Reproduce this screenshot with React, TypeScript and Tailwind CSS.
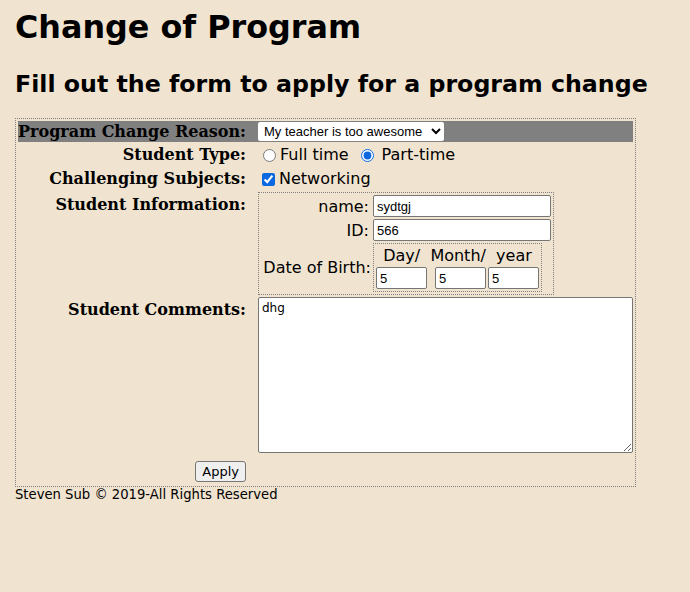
import React from "react";

const sans = "font-['DejaVu_Sans',Verdana,sans-serif]";
const serif = "font-['DejaVu_Serif',Georgia,serif]";
const arial = "font-['Liberation_Sans',Arial,sans-serif]";

const inputCls = `block h-[22px] rounded-[2px] border border-[#767676] bg-white px-[3px] text-[13px] text-black ${arial}`;
const labelCls = `w-[232px] p-0 pr-[4px] text-right text-[16px] font-bold ${serif}`;

export default function App() {
  return (
    <div className={`min-h-[592px] w-full bg-[#f0e4d0] px-[15px] pt-[8px] text-black ${sans}`}>
      <h1 className="text-[31.8px] font-bold leading-[37px]">Change of Program</h1>
      <h2 className="mt-[25px] text-[23.7px] font-bold leading-[28px]">
        Fill out the form to apply for a program change
      </h2>
      <form className="mt-[20px]">
        <table className="w-[621px] border border-dotted border-[#808080] border-separate border-spacing-[2px]">
          <tbody>
            <tr className="bg-[#808080]">
              <td className={`${labelCls} h-[21px] leading-[19px] shadow-[2px_0_0_#808080]`}>
                Program Change Reason:
              </td>
              <td className="h-[21px] p-0 pl-[6px]">
                <select
                  defaultValue="awesome"
                  className={`block h-[19px] w-[186px] rounded-[2px] bg-white px-[2px] text-[13px] leading-[15px] text-black ${arial}`}
                >
                  <option value="awesome">My teacher is too awesome</option>
                </select>
              </td>
            </tr>
            <tr>
              <td className={`${labelCls} h-[22px] leading-[22px]`}>Student Type:</td>
              <td className="h-[22px] p-0 pl-[6px] text-[16px] leading-[22px]">
                <div className="flex items-center">
                  <input type="radio" name="t" className="ml-[5px] mr-[4px] h-[13px] w-[13px]" />
                  <span>Full time</span>
                  <input
                    type="radio"
                    name="t"
                    defaultChecked
                    className="ml-[12px] mr-[8px] h-[13px] w-[13px] accent-[#0b68e0]"
                  />
                  <span>Part-time</span>
                </div>
              </td>
            </tr>
            <tr>
              <td className={`${labelCls} h-[22px] leading-[22px]`}>Challenging Subjects:</td>
              <td className="h-[22px] p-0 pl-[6px] text-[16px] leading-[22px]">
                <div className="flex items-center">
                  <input type="checkbox" defaultChecked className="ml-[4px] mr-[4px] h-[13px] w-[13px] accent-[#0b68e0]" />
                  <span>Networking</span>
                </div>
              </td>
            </tr>
            <tr>
              <td className={`${labelCls} align-top pt-[2px] leading-[22px]`}>Student Information:</td>
              <td className="p-0 pl-[6px]">
                <table className="border border-dotted border-[#808080] border-separate border-spacing-[2px] text-[16px]">
                  <tbody>
                    <tr>
                      <td className="w-[110px] p-0 pr-[2px] text-right leading-[19px]">name:</td>
                      <td className="p-0">
                        <input defaultValue="sydtgj" className={`${inputCls} w-[178px]`} />
                      </td>
                    </tr>
                    <tr>
                      <td className="p-0 pr-[2px] text-right leading-[19px]">ID:</td>
                      <td className="p-0">
                        <input defaultValue="566" className={`${inputCls} w-[178px]`} />
                      </td>
                    </tr>
                    <tr>
                      <td className="p-0 pl-[1px] text-right leading-[19px]">Date of Birth:</td>
                      <td className="p-0">
                        <table className="border border-dotted border-[#808080] border-separate border-spacing-[2px]">
                          <tbody>
                            <tr>
                              <td colSpan={3} className="p-0 text-center leading-[19px]">
                                Day/&nbsp; Month/&nbsp; year
                              </td>
                            </tr>
                            <tr>
                              <td className="p-0">
                                <input defaultValue="5" className={`${inputCls} w-[51px]`} />
                              </td>
                              <td className="p-0 pl-[6px]">
                                <input defaultValue="5" className={`${inputCls} w-[51px]`} />
                              </td>
                              <td className="p-0">
                                <input defaultValue="5" className={`${inputCls} w-[51px]`} />
                              </td>
                            </tr>
                          </tbody>
                        </table>
                      </td>
                    </tr>
                  </tbody>
                </table>
              </td>
            </tr>
            <tr>
              <td className={`${labelCls} align-top pt-[2px] leading-[22px]`}>Student Comments:</td>
              <td className="p-0 pl-[6px]">
                <textarea
                  defaultValue="dhg"
                  className={`block h-[156px] w-[375px] resize rounded-[2px] border border-[#767676] bg-white px-[3px] py-[3px] text-[12px] leading-[14px] ${sans}`}
                />
              </td>
            </tr>
            <tr>
              <td className="p-0 pr-[4px] pt-[4px] pb-[1px] text-right">
                <button
                  type="button"
                  className={`h-[21px] rounded-[3px] border border-[#767676] bg-[#efefef] px-[6px] text-[13px] leading-[15px] ${sans}`}
                >
                  Apply
                </button>
              </td>
              <td className="p-0"></td>
            </tr>
          </tbody>
        </table>
      </form>
      <p className="mt-[0px] text-[13.2px] leading-[16px]">Steven Sub © 2019-All Rights Reserved</p>
    </div>
  );
}
